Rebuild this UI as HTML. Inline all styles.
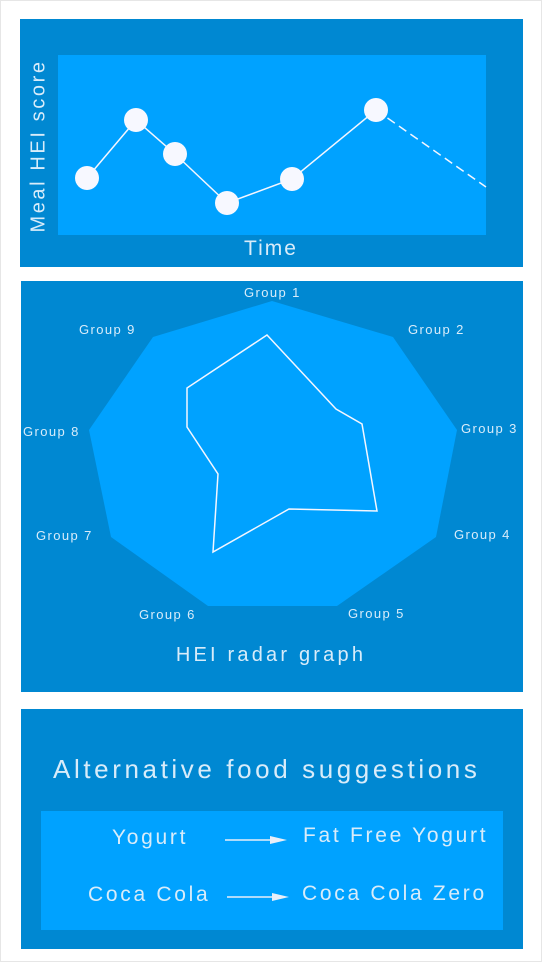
<!DOCTYPE html>
<html><head><meta charset="utf-8"><style>
html,body{margin:0;padding:0;background:#fff;}
body{width:542px;height:962px;position:relative;overflow:hidden;font-family:"Liberation Sans",sans-serif;}
.frame{position:absolute;left:0;top:0;width:540px;height:960px;border:1px solid #e6e6e6;}
.p{position:absolute;background:#0088D2;}
.l{position:absolute;background:#00A2FF;}
.t{position:absolute;color:#d8ecfa;white-space:nowrap;}
.g{font-size:13px;letter-spacing:1.4px;}
.b{font-size:21px;letter-spacing:2.7px;}
</style></head><body>
<div class="frame"></div>
<div class="p" style="left:20px;top:19px;width:503px;height:248px;"></div>
<div class="l" style="left:58px;top:55px;width:428px;height:180px;"></div>
<svg style="position:absolute;left:0;top:0" width="542" height="962">
<polyline points="87,178 136,120 175,154 227,203 292,179 376,110" fill="none" stroke="#f4f6ff" stroke-width="1.5"/>
<line x1="376" y1="110" x2="486" y2="187" stroke="#f4f6ff" stroke-width="1.5" stroke-dasharray="9,5"/>
<g fill="#f7f8ff"><circle cx="87" cy="178" r="12"/><circle cx="136" cy="120" r="12"/><circle cx="175" cy="154" r="12"/><circle cx="227" cy="203" r="12"/><circle cx="292" cy="179" r="12"/><circle cx="376" cy="110" r="12"/></g>
</svg>
<div class="t" style="left:0;top:237px;width:542px;text-align:center;font-size:21px;letter-spacing:2px;">Time</div>
<div class="t" style="left:39px;top:146px;font-size:20px;letter-spacing:2.6px;transform:translate(-50%,-50%) rotate(-90deg);">Meal HEI score</div>

<div class="p" style="left:21px;top:281px;width:502px;height:411px;"></div>
<svg style="position:absolute;left:0;top:0" width="542" height="962">
<polygon points="272,301 393,337 457,430 436,537 337,606 208,606 111,537 89,430 153,337" fill="#00A2FF"/>
<polygon points="267,335 336,409 362,424 377,511 289,509 213,552 218,474 187,427 187,388" fill="none" stroke="#f4f6ff" stroke-width="1.5"/>
</svg>
<div class="t g" style="left:244px;top:285px;">Group 1</div>
<div class="t g" style="left:408px;top:322px;">Group 2</div>
<div class="t g" style="left:461px;top:421px;">Group 3</div>
<div class="t g" style="left:454px;top:527px;">Group 4</div>
<div class="t g" style="left:348px;top:606px;">Group 5</div>
<div class="t g" style="left:139px;top:607px;">Group 6</div>
<div class="t g" style="left:36px;top:528px;">Group 7</div>
<div class="t g" style="left:23px;top:424px;">Group 8</div>
<div class="t g" style="left:79px;top:322px;">Group 9</div>
<div class="t" style="left:0;top:644px;width:542px;text-align:center;font-size:20px;letter-spacing:3.2px;">HEI radar graph</div>

<div class="p" style="left:21px;top:709px;width:502px;height:240px;"></div>
<div class="t" style="left:53px;top:754px;font-size:26px;letter-spacing:3.6px;">Alternative food suggestions</div>
<div class="l" style="left:41px;top:811px;width:462px;height:119px;"></div>
<div class="t b" style="left:112px;top:826px;">Yogurt</div>
<div class="t b" style="left:303px;top:824px;">Fat Free Yogurt</div>
<div class="t b" style="left:88px;top:883px;">Coca Cola</div>
<div class="t b" style="left:302px;top:882px;">Coca Cola Zero</div>
<svg style="position:absolute;left:0;top:0" width="542" height="962">
<line x1="225" y1="840" x2="276" y2="840" stroke="#e8eef8" stroke-width="1.5"/>
<polygon points="270,836 287,840 270,844" fill="#e8eef8"/>
<line x1="227" y1="897" x2="278" y2="897" stroke="#e8eef8" stroke-width="1.5"/>
<polygon points="272,893 289,897 272,901" fill="#e8eef8"/>
</svg>
</body></html>
